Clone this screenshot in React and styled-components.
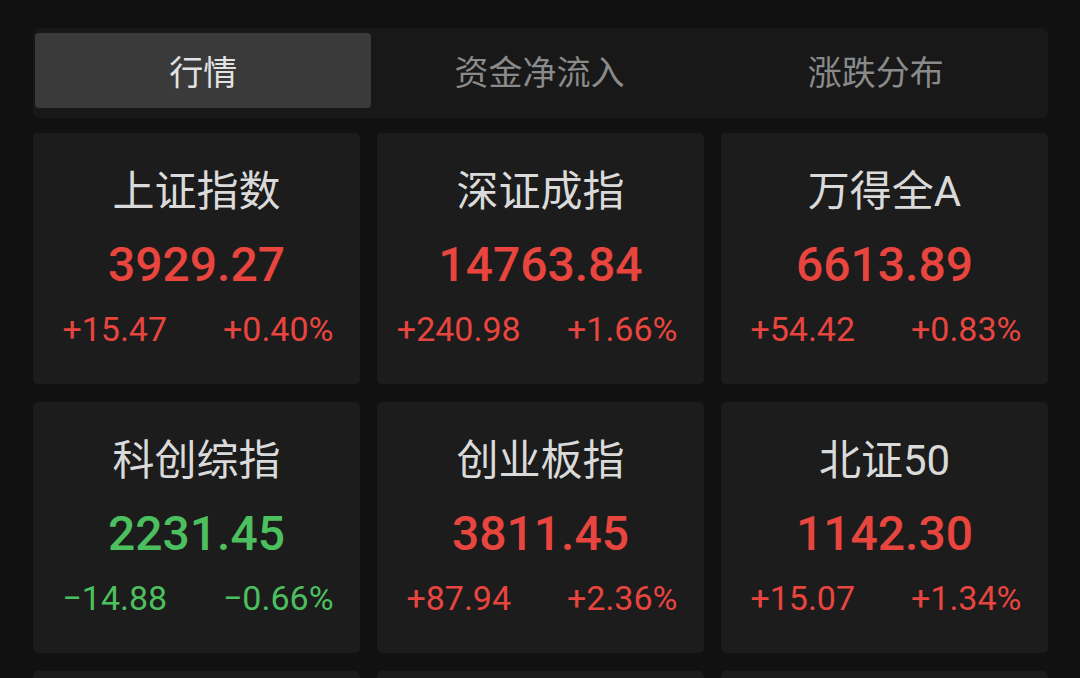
import React, { useState } from "react";
import styled, { createGlobalStyle } from "styled-components";

const GlobalStyle = createGlobalStyle`
  html, body {
    margin: 0;
    padding: 0;
    background: #111111;
    overflow: hidden;
  }
  body {
    font-family: Roboto, "Noto Sans CJK SC", "Noto Sans", sans-serif;
    -webkit-font-smoothing: antialiased;
  }
`;

const Page = styled.div`
  width: 1080px;
  height: 678px;
  box-sizing: border-box;
  padding: 28px 32px 0 33px;
  background: #111111;
  overflow: hidden;
`;

const TabBar = styled.div`
  display: grid;
  grid-template-columns: repeat(3, 1fr);
  padding: 5px 4px 10px 2px;
  background: #181818;
  border-radius: 6px;
  margin-bottom: 15px;
`;

const Tab = styled.button`
  height: 75px;
  border: none;
  border-radius: 4px;
  background: ${(p) => (p.$active ? "#3a3a3a" : "transparent")};
  color: ${(p) => (p.$active ? "#e2e2e2" : "#8a8a8a")};
  font-family: "Noto Sans CJK SC", sans-serif;
  font-size: 34px;
  line-height: 1;
  cursor: pointer;
  padding: 0;
`;

const Grid = styled.div`
  display: grid;
  grid-template-columns: repeat(3, 327px);
  grid-auto-rows: 251px;
  column-gap: 17px;
  row-gap: 18px;
`;

const Card = styled.div`
  background: #1c1c1c;
  border-radius: 5px;
  display: flex;
  flex-direction: column;
  align-items: center;
  padding-top: 34px;
  box-sizing: border-box;
`;

const Title = styled.div`
  font-family: Roboto, "Noto Sans CJK SC", sans-serif;
  font-size: 42px;
  line-height: 50px;
  color: #dadada;
  height: 50px;
`;

const Price = styled.div`
  margin-top: 20px;
  font-family: Roboto, sans-serif;
  font-weight: 500;
  font-size: 48px;
  line-height: 56px;
  color: ${(p) => p.$color};
`;

const ChangeRow = styled.div`
  margin-top: 16px;
  width: 100%;
  display: grid;
  grid-template-columns: 1fr 1fr;
`;

const Change = styled.span`
  text-align: center;
  font-family: Roboto, sans-serif;
  font-size: 34px;
  line-height: 40px;
  color: ${(p) => p.$color};
`;

const RED = "#e9453f";
const GREEN = "#4cbf5e";

const indices = [
  { name: "上证指数", price: "3929.27", diff: "+15.47", pct: "+0.40%", up: true },
  { name: "深证成指", price: "14763.84", diff: "+240.98", pct: "+1.66%", up: true },
  { name: "万得全A", price: "6613.89", diff: "+54.42", pct: "+0.83%", up: true },
  { name: "科创综指", price: "2231.45", diff: "−14.88", pct: "−0.66%", up: false },
  { name: "创业板指", price: "3811.45", diff: "+87.94", pct: "+2.36%", up: true },
  { name: "北证50", price: "1142.30", diff: "+15.07", pct: "+1.34%", up: true },
];

// next row of cards, scrolled just below the fold
const pending = ["r3-a", "r3-b", "r3-c"];

const tabs = ["行情", "资金净流入", "涨跌分布"];

export default function App() {
  const [active, setActive] = useState(0);
  return (
    <>
      <GlobalStyle />
      <Page>
        <TabBar>
          {tabs.map((t, i) => (
            <Tab key={t} $active={i === active} onClick={() => setActive(i)}>
              {t}
            </Tab>
          ))}
        </TabBar>
        <Grid>
          {indices.map((it) => {
            const color = it.up ? RED : GREEN;
            return (
              <Card key={it.name}>
                <Title>{it.name}</Title>
                <Price $color={color}>{it.price}</Price>
                <ChangeRow>
                  <Change $color={color}>{it.diff}</Change>
                  <Change $color={color}>{it.pct}</Change>
                </ChangeRow>
              </Card>
            );
          })}
          {pending.map((k) => (
            <Card key={k} />
          ))}
        </Grid>
      </Page>
    </>
  );
}
